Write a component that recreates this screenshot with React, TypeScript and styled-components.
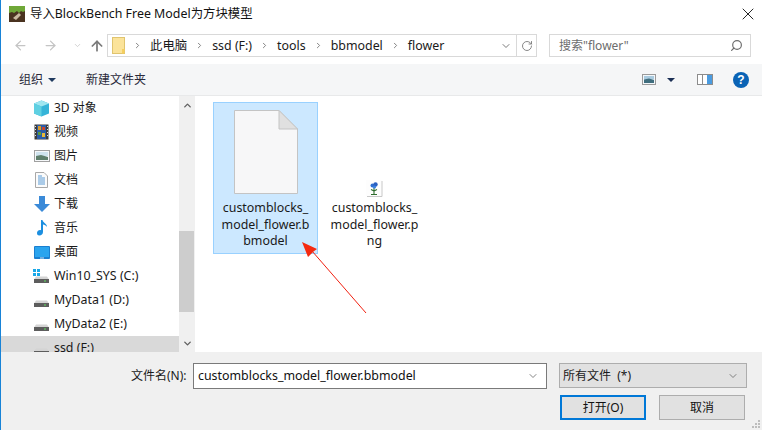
import React from "react";
import styled, { createGlobalStyle } from "styled-components";
import { ChevronDown, ChevronUp, ChevronRight, ArrowLeft, ArrowRight, ArrowUp, RotateCw, Search, X } from "lucide-react";

const Global = createGlobalStyle`
  html, body { margin: 0; padding: 0; background: #fff; }
  #root { width: 762px; height: 430px; overflow: hidden; }
  * { box-sizing: border-box; }
`;

const Dialog = styled.div`
  position: relative;
  width: 762px;
  height: 430px;
  display: flex;
  flex-direction: column;
  border-left: 1px solid #1883d7;
  background: #fff;
  color: #1a1a1a;
  font: 12px/16px "Noto Sans", "Noto Sans CJK SC", sans-serif;
  overflow: hidden;
`;

const Latin = styled.span`
  font-size: 12.4px;
`;

const TitleBar = styled.div`
  height: 30px;
  flex: none;
  display: flex;
  align-items: center;
  padding: 0 4px 2px 8px;
  gap: 5px;
`;
const TitleText = styled.div`
  flex: 1;
  font-size: 12.4px;
  color: #111;
`;
const CloseBtn = styled.div`
  display: flex;
  color: #111;
`;

const NavBar = styled.div`
  height: 34px;
  flex: none;
  display: flex;
  align-items: flex-start;
  padding: 4px 10px 0 12px;
`;
const NavButtons = styled.div`
  width: 94px;
  height: 23px;
  flex: none;
  display: flex;
  align-items: center;
  gap: 15px;
  color: #c4c4c4;
`;
const NavUp = styled.span`
  display: flex;
  color: #7a7a7a;
  margin-left: -8px;
`;
const Address = styled.div`
  width: 430px;
  height: 23px;
  flex: none;
  display: flex;
  align-items: center;
  border: 1px solid #d9d9d9;
  padding-left: 4px;
`;
const Crumb = styled.span`
  color: #1a1a1a;
  font-size: 12.4px;
`;
const Sep = styled.span`
  display: flex;
  color: #777;
  margin: 0 8px;
`;
const Spacer = styled.div`
  flex: 1;
`;
const AddrBtn = styled.div<{ $w: number; $line?: boolean }>`
  width: ${(p) => p.$w}px;
  height: 100%;
  display: flex;
  align-items: center;
  justify-content: center;
  color: #7a7a7a;
  border-left: ${(p) => (p.$line ? "1px solid #d9d9d9" : "none")};
`;
const SearchBox = styled.div`
  width: 202px;
  height: 23px;
  flex: none;
  margin-left: 12px;
  display: flex;
  align-items: center;
  justify-content: space-between;
  border: 1px solid #d9d9d9;
  padding: 0 7px 0 9px;
  color: #6d6d6d;
`;

const Toolbar = styled.div`
  height: 32px;
  flex: none;
  display: flex;
  align-items: center;
  background: #f5f6f7;
  border-bottom: 1px solid #e8e9ea;
  padding: 0 13px 0 18px;
  color: #333;
`;
const ToolLabel = styled.span`
  color: #2a2a3a;
`;
const Caret = styled.span<{ $c?: string; $ml?: number }>`
  width: 0;
  height: 0;
  border-left: 4px solid transparent;
  border-right: 4px solid transparent;
  border-top: 4px solid ${(p) => p.$c || "#1f3a5f"};
  margin: 1px 0 0 ${(p) => p.$ml ?? 5}px;
`;
const NewFolder = styled.span`
  margin-left: 30px;
  color: #2a2a3a;
`;
const ToolRight = styled.div`
  margin-left: auto;
  display: flex;
  align-items: center;
`;
const HelpBadge = styled.span`
  width: 16px;
  height: 16px;
  border-radius: 50%;
  background: #0a63b5;
  color: #fff;
  font: bold 12px/16px "Liberation Sans", sans-serif;
  text-align: center;
  margin-left: 20px;
`;

const Main = styled.div`
  flex: 1;
  min-height: 0;
  display: flex;
`;
const Sidebar = styled.div`
  width: 178px;
  flex: none;
  overflow: hidden;
`;
const Row = styled.div<{ $sel?: boolean }>`
  height: 24px;
  display: flex;
  align-items: center;
  padding-left: 32px;
  gap: 4px;
  background: ${(p) => (p.$sel ? "#d9d9d9" : "transparent")};
  color: #1a1a1a;
  white-space: nowrap;
`;
const RowIcon = styled.span`
  width: 17px;
  height: 16px;
  flex: none;
  display: flex;
  align-items: center;
  justify-content: center;
`;
const Scrollbar = styled.div`
  width: 16px;
  flex: none;
  background: #f0f0f0;
  display: flex;
  flex-direction: column;
  align-items: center;
  color: #606060;
  padding: 1px 0 0;
`;
const ScrollBtn = styled.div`
  height: 17px;
  flex: none;
  display: flex;
  align-items: center;
  justify-content: center;
`;
const Track = styled.div`
  flex: 1;
  width: 100%;
  padding: 117px 1px 23px 0;
`;
const Thumb = styled.div`
  height: 100%;
  background: #cdcdcd;
`;
const Files = styled.div`
  flex: 1;
  display: flex;
  align-items: flex-start;
  gap: 4px;
  padding: 6px 0 0 18px;
`;
const Tile = styled.div<{ $sel?: boolean }>`
  width: 105px;
  height: 152px;
  flex: none;
  display: flex;
  flex-direction: column;
  align-items: center;
  border: 1px solid ${(p) => (p.$sel ? "#99d1ff" : "transparent")};
  background: ${(p) => (p.$sel ? "#cce8ff" : "transparent")};
  padding-top: 7px;
`;
const TileIcon = styled.div<{ $drop?: number }>`
  height: 84px;
  width: 100%;
  display: flex;
  align-items: flex-end;
  justify-content: center;
  & > svg {
    margin-bottom: ${(p) => -(p.$drop ?? 0)}px;
  }
`;
const TileName = styled.div`
  width: 100%;
  margin-top: 6px;
  text-align: center;
  line-height: 16.5px;
  font-size: 12.4px;
  color: #1a1a1a;
  white-space: nowrap;
`;
const NameLine = styled.div``;

const Footer = styled.div`
  height: 78px;
  flex: none;
  background: #f0f0f0;
  padding: 11px 17px 0 130px;
  display: flex;
  flex-direction: column;
  gap: 6px;
`;
const FooterRow = styled.div`
  display: flex;
  align-items: flex-start;
`;
const NameLabel = styled.span`
  width: 62px;
  flex: none;
  line-height: 26px;
  color: #1a1a1a;
`;
const NameInput = styled.div`
  width: 354px;
  height: 26px;
  flex: none;
  background: #fff;
  border: 1px solid #7a7a7a;
  display: flex;
  align-items: center;
  justify-content: space-between;
  padding: 0 7px 0 4px;
  color: #111;
`;
const TypeSelect = styled.div`
  width: 188px;
  height: 25px;
  flex: none;
  margin-left: 12px;
  background: #e1e1e1;
  border: 1px solid #adadad;
  display: flex;
  align-items: center;
  justify-content: space-between;
  padding: 0 7px 0 3px;
  color: #1a1a1a;
`;
const Buttons = styled.div`
  display: flex;
  justify-content: flex-end;
  gap: 13px;
`;
const Btn = styled.div<{ $primary?: boolean }>`
  width: 86px;
  height: 25px;
  display: flex;
  align-items: center;
  justify-content: center;
  background: #e1e1e1;
  border: ${(p) => (p.$primary ? "2px solid #0078d7" : "1px solid #adadad")};
  color: #111;
`;
const Grip = styled.svg`
  position: absolute;
  right: 1px;
  bottom: 1px;
`;
const Annotation = styled.svg`
  position: absolute;
  left: -1px;
  top: 0;
  pointer-events: none;
`;

const Drive = ({ win }: { win?: boolean }) => (
  <svg width="17" height="16" viewBox="0 0 17 16">
    {win && (
      <g fill="#18a8e8">
        <rect x="0" y="1" width="3" height="3" />
        <rect x="4" y="1" width="3" height="3" />
        <rect x="0" y="5" width="3" height="3" />
        <rect x="4" y="5" width="3" height="3" />
      </g>
    )}
    <path d="M3 8.5h11l2 3H1z" fill="#d4d4d4" />
    <rect x="1" y="11" width="15" height="4" fill="#5d5d5d" />
    <rect x="11" y="12.5" width="2" height="1" fill="#5fe05f" />
  </svg>
);

const items: [React.ReactNode, React.ReactNode, string][] = [
  [
    <svg width="17" height="17" viewBox="0 0 17 17">
      <path d="M8.5 0.5 16 3.5v10L8.5 16.5 1 13.5v-10z" fill="#35b4d8" />
      <path d="M8.5 0.5 16 3.5 8.5 6.5 1 3.5z" fill="#9fe6f0" />
      <path d="M1 3.5 8.5 6.5v10L1 13.5z" fill="#5fd0e2" />
    </svg>,
    "3D 对象",
    "3d",
  ],
  [
    <svg width="15" height="16" viewBox="0 0 15 16">
      <rect x="0.5" y="0.5" width="14" height="15" fill="#3b3b3b" />
      <rect x="3" y="1" width="9" height="14" fill="#2a5ca8" />
      <rect x="4" y="2" width="3" height="4" fill="#d99b2a" />
      <rect x="8" y="3" width="3" height="3" fill="#c9452d" />
      <rect x="4" y="8" width="3" height="3" fill="#5a9a3a" />
      <rect x="8" y="9" width="3" height="4" fill="#e5b93a" />
      <path d="M1 2h1v1H1zM1 5h1v1H1zM1 8h1v1H1zM1 11h1v1H1zM13 2h1v1h-1zM13 5h1v1h-1zM13 8h1v1h-1zM13 11h1v1h-1z" fill="#ddd" />
    </svg>,
    "视频",
    "video",
  ],
  [
    <svg width="16" height="12" viewBox="0 0 16 12">
      <rect x="0.5" y="0.5" width="15" height="11" fill="#f6f8fa" stroke="#a0a0a0" />
      <rect x="2" y="2" width="12" height="4" fill="#cfe3ee" />
      <path d="M2 6 7 5 14 7v3H2z" fill="#5f7f6c" />
    </svg>,
    "图片",
    "pic",
  ],
  [
    <svg width="13" height="16" viewBox="0 0 13 16">
      <path d="M0.5 0.5h8.5l3.5 3.5v11.5H0.5z" fill="#fbfbfb" stroke="#a8a8a8" />
      <path d="M3 4h4M3 6h7M3 8h7M3 10h7M3 12h7" stroke="#5b9bd5" />
    </svg>,
    "文档",
    "doc",
  ],
  [
    <svg width="16" height="16" viewBox="0 0 16 16">
      <path d="M5 0h6v8h5l-8 8-8-8h5z" fill="#3a8ad8" />
    </svg>,
    "下载",
    "dl",
  ],
  [
    <svg width="12" height="16" viewBox="0 0 12 16">
      <path d="M5 0h1.5c.4 3 4.5 3.5 4.5 7-1-1.5-2.6-2.2-4-2.4V12c0 2-1.6 3.5-3.6 3.5S1 14.2 1 12.8 2.6 10 4 10c.4 0 .7 0 1 .2z" fill="#1c8fe0" />
    </svg>,
    "音乐",
    "music",
  ],
  [
    <svg width="16" height="13" viewBox="0 0 16 13">
      <rect x="0" y="0" width="16" height="13" rx="1" fill="#1a7fd0" />
      <rect x="1" y="1" width="14" height="10" fill="#2aa4ee" />
      <rect x="6" y="11.5" width="4" height="1" fill="#cde" />
    </svg>,
    "桌面",
    "desk",
  ],
  [<Drive win />, <Latin>Win10_SYS (C:)</Latin>, "c"],
  [<Drive />, <Latin>MyData1 (D:)</Latin>, "d"],
  [<Drive />, <Latin>MyData2 (E:)</Latin>, "e"],
  [<Drive />, <Latin>ssd (F:)</Latin>, "f"],
];

const crumbs = ["此电脑", "ssd (F:)", "tools", "bbmodel", "flower"];

export default function App() {
  return (
    <>
      <Global />
      <Dialog>
        <TitleBar>
          <svg width="16" height="16" viewBox="0 0 16 16">
            <rect width="16" height="16" fill="#4a3320" />
            <path d="M0 0h16v5l-2 1-2-1-2 2-2-2-3 2-2-1-3 1z" fill="#6fa838" />
            <path d="M4 12 10 7l2 2-5 5z" fill="#c9b9a0" />
          </svg>
          <TitleText>导入BlockBench Free Model为方块模型</TitleText>
          <CloseBtn>
            <X size={20} strokeWidth={1.1} />
          </CloseBtn>
        </TitleBar>

        <NavBar>
          <NavButtons>
            <ArrowLeft size={15} strokeWidth={2} />
            <ArrowRight size={15} strokeWidth={2} />
            <ChevronDown size={9} strokeWidth={2} />
            <NavUp>
              <ArrowUp size={16} strokeWidth={2.6} />
            </NavUp>
          </NavButtons>
          <Address>
            <svg width="13" height="17" viewBox="0 0 13 17">
              <rect x="0.5" y="0.5" width="12" height="16" fill="#fbe39a" stroke="#e0c46e" />
              <rect x="10" y="12" width="2.5" height="4.5" fill="#f5cf5f" />
            </svg>
            {crumbs.map((c) => (
              <React.Fragment key={c}>
                <Sep>
                  <ChevronRight size={9} strokeWidth={2.4} />
                </Sep>
                <Crumb>{c}</Crumb>
              </React.Fragment>
            ))}
            <Spacer />
            <AddrBtn $w={20}>
              <ChevronDown size={12} strokeWidth={2} />
            </AddrBtn>
            <AddrBtn $w={20} $line>
              <RotateCw size={12} strokeWidth={1.8} />
            </AddrBtn>
          </Address>
          <SearchBox>
            <span>搜索"flower"</span>
            <Search size={13} strokeWidth={2.2} style={{ transform: "scaleX(-1)" }} />
          </SearchBox>
        </NavBar>

        <Toolbar>
          <ToolLabel>组织</ToolLabel>
          <Caret />
          <NewFolder>新建文件夹</NewFolder>
          <ToolRight>
            <svg width="14" height="11" viewBox="0 0 14 11">
              <rect x="0.5" y="0.5" width="13" height="10" fill="#f4f7fa" stroke="#9a9a9a" />
              <rect x="2" y="2" width="10" height="3.5" fill="#a9cbe0" />
              <path d="M2 5.5 7 4.5 12 6v3H2z" fill="#3f6e7e" />
            </svg>
            <Caret $c="#1b2f55" $ml={11} />
            <svg style={{ marginLeft: 22 }} width="16" height="11" viewBox="0 0 16 11">
              <rect x="0.5" y="0.5" width="15" height="10" fill="#fff" stroke="#8c8c8c" />
              <rect x="5" y="1" width="1" height="9" fill="#8c8c8c" />
              <rect x="10" y="1" width="5" height="9" fill="#4a9be0" />
            </svg>
            <HelpBadge>?</HelpBadge>
          </ToolRight>
        </Toolbar>

        <Main>
          <Sidebar>
            {items.map(([icon, label, key], i) => (
              <Row key={key} $sel={i === items.length - 1}>
                <RowIcon>{icon}</RowIcon>
                <span>{label}</span>
              </Row>
            ))}
          </Sidebar>
          <Scrollbar>
            <ScrollBtn>
              <ChevronUp size={11} strokeWidth={3} />
            </ScrollBtn>
            <Track>
              <Thumb />
            </Track>
            <ScrollBtn>
              <ChevronDown size={11} strokeWidth={3} />
            </ScrollBtn>
          </Scrollbar>
          <Files>
            <Tile $sel>
              <TileIcon>
                <svg width="64" height="84" viewBox="0 0 64 84">
                  <path d="M0.5 0.5H45L63.5 19V83.5H0.5z" fill="#f7f7f8" stroke="#c4c4c4" />
                  <path d="M45 0.5V19H63.5z" fill="#e0e0e0" stroke="#c4c4c4" />
                </svg>
              </TileIcon>
              <TileName>
                <NameLine>customblocks_</NameLine>
                <NameLine>model_flower.b</NameLine>
                <NameLine>bmodel</NameLine>
              </TileName>
            </Tile>
            <Tile>
              <TileIcon $drop={3}>
                <svg width="17" height="17" viewBox="0 0 17 17">
                  <rect x="0" y="0" width="16" height="16" fill="#fdfdfd" />
                  <path d="M16 1v15.5H1" fill="none" stroke="#c8c8c8" />
                  <path d="M8 8v6M5 14.5h6M8 11l-3-1.5M8 11l3-1.5" stroke="#2f6d2f" strokeWidth="1.1" fill="none" />
                  <circle cx="6.5" cy="5.5" r="2" fill="#2f6fd0" />
                  <circle cx="9.5" cy="4.5" r="2.2" fill="#2a5fc0" />
                  <circle cx="8.5" cy="7" r="1.6" fill="#3a80e0" />
                </svg>
              </TileIcon>
              <TileName>
                <NameLine>customblocks_</NameLine>
                <NameLine>model_flower.p</NameLine>
                <NameLine>ng</NameLine>
              </TileName>
            </Tile>
          </Files>
        </Main>

        <Footer>
          <FooterRow>
            <NameLabel>文件名(N):</NameLabel>
            <NameInput>
              <Latin>customblocks_model_flower.bbmodel</Latin>
              <ChevronDown size={12} color="#666" strokeWidth={1.6} />
            </NameInput>
            <TypeSelect>
              <span>所有文件&nbsp;&nbsp;(*)</span>
              <ChevronDown size={12} color="#666" strokeWidth={1.6} />
            </TypeSelect>
          </FooterRow>
          <Buttons>
            <Btn $primary>打开(O)</Btn>
            <Btn>取消</Btn>
          </Buttons>
        </Footer>

        <Grip width="10" height="10" viewBox="0 0 10 10">
          <path d="M7 1h2v2H7zM4 4h2v2H4zM7 4h2v2H7zM1 7h2v2H1zM4 7h2v2H4zM7 7h2v2H7z" fill="#bdbdbd" />
        </Grip>

        <Annotation width="762" height="430" viewBox="0 0 762 430">
          <line x1="366" y1="313" x2="312" y2="251" stroke="#f02010" strokeWidth="1" />
          <path d="M302 242 317 249 313.5 251.5 308 257z" fill="#f52a10" />
        </Annotation>
      </Dialog>
    </>
  );
}
